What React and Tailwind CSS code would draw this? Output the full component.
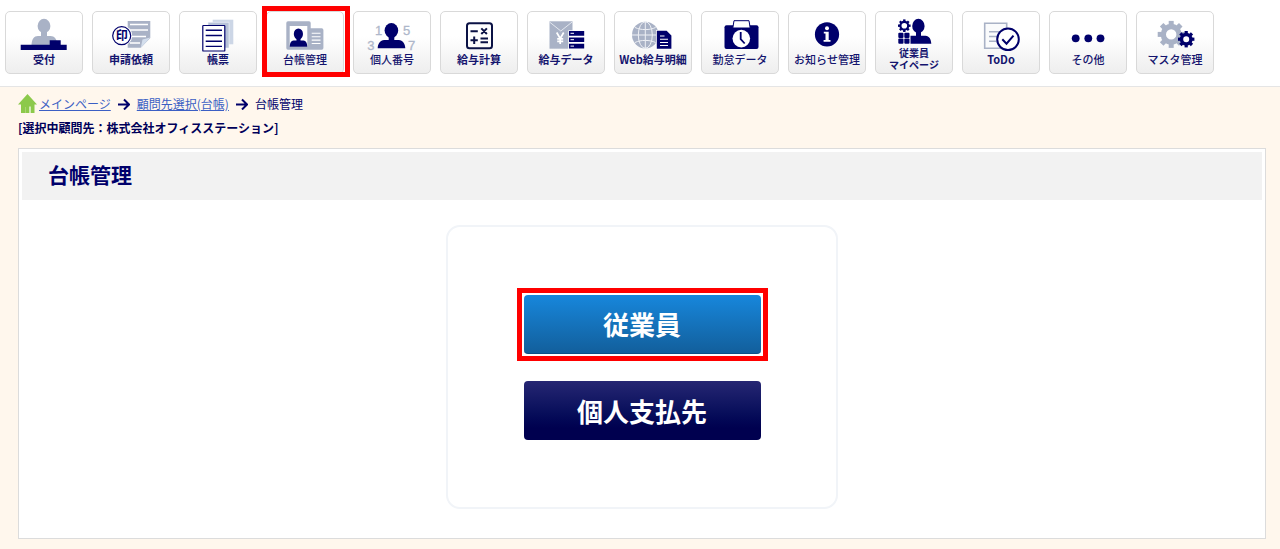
import React from 'react';

const NAVY = '#00006b';
const GRAY = '#a9b2c6';

// ==================================================
// ICON HELPERS
// ==================================================
const Icon = ({ children }) => (
  <svg
    viewBox="0 0 76 34"
    className="block h-[34px] w-[76px] shrink-0 overflow-visible"
    fill="none"
    aria-hidden="true"
  >
    {children}
  </svg>
);

const TEETH = [0, 45, 90, 135, 180, 225, 270, 315];

const Gear = ({ cx, cy, r, hole, tooth, color }) => (
  <g transform={`translate(${cx} ${cy})`} fill={color}>
    {TEETH.map((deg) => (
      <rect
        key={deg}
        x={-tooth / 2}
        y={-r}
        width={tooth}
        height={(r - hole) * 0.6}
        transform={`rotate(${deg})`}
      />
    ))}
    <circle
      r={(r * 0.78 + hole) / 2}
      fill="none"
      stroke={color}
      strokeWidth={r * 0.78 - hole}
    />
  </g>
);

// ==================================================
// MENU ICONS
// ==================================================
const ReceptionIcon = () => (
  <Icon>
    <ellipse cx="38" cy="14" rx="6.4" ry="7.2" fill={GRAY} />
    <path d="M35 19h6v5h3.5c4 0 6.5 3 6.8 9H25.5c.3-6 2.5-9 6.5-9h3z" fill={GRAY} />
    <path d="M14.7 32.7H43.7V28.3h11v4.4h6V38h-46z" fill={NAVY} />
  </Icon>
);

const RequestIcon = () => (
  <Icon>
    <path d="M34.7 9h22.6v17l-9.5 9.7H34.7z" fill={GRAY} />
    <path d="M47.8 35.7l1.7-8.3 7.8-2z" fill="#d3deed" />
    <path d="M37 12.5h18M37 18h18M37 24.5h16M37 31h10" stroke="#fff" strokeWidth="1.5" />
    <circle cx="28.7" cy="23.7" r="10.5" fill="#fff" />
    <circle cx="28.7" cy="23.7" r="9" fill="#fff" stroke={NAVY} strokeWidth="1.2" />
    <text x="28.7" y="28" textAnchor="middle" fontSize="12" fontWeight="700" fill={NAVY}>印</text>
  </Icon>
);

const FormsIcon = () => (
  <Icon>
    <path d="M32.7 7.7h20.6v24.6H32.7z" fill="#ccd6e6" />
    <path d="M28 10.3h21V36H28z" fill="#b7c2d8" stroke="#f4f6fa" strokeWidth=".6" />
    <rect x="22.8" y="13.5" width="22" height="25.5" rx=".6" fill="#fff" stroke={NAVY} strokeWidth="1.2" />
    <path d="M25.7 18.3H42M25.7 23.5H42M25.7 29.2H42M25.7 34.4H42" stroke={NAVY} strokeWidth="1.4" />
  </Icon>
);

const LedgerIcon = () => (
  <Icon>
    <path d="M21 9.2h21a1.7 1.7 0 0 1 1.7 1.7v5.4h11a1.7 1.7 0 0 1 1.7 1.7v18a1.7 1.7 0 0 1-1.7 1.7H21a1.7 1.7 0 0 1-1.7-1.7V10.9A1.7 1.7 0 0 1 21 9.2z" fill={GRAY} />
    <path d="M22.7 14h17.6v20.7H22.7z" fill="#fff" />
    <ellipse cx="31.4" cy="22" rx="4.6" ry="5.5" fill={NAVY} />
    <path d="M29.5 26h4v2.5h3c2.5.3 3.6 2.2 3.8 6.2H22.7c.2-4 1.3-5.9 3.8-6.2h3z" fill={NAVY} />
    <path d="M44.7 21.3h8.8M44.7 24.7h8.8M44.7 28.1h8.8M44.7 31.5h8.8" stroke="#fff" strokeWidth="1.1" />
  </Icon>
);

const MyNumberIcon = () => (
  <Icon>
    <g fill="#aeb7ca" stroke="#aeb7ca" strokeWidth=".3" className="font-['Liberation_Sans',sans-serif]" fontSize="13" textAnchor="middle">
      <text x="24.5" y="23">1</text>
      <text x="16.8" y="37.5">3</text>
      <text x="52.7" y="22.5">5</text>
      <text x="57.7" y="37.5">7</text>
    </g>
    <ellipse cx="37.4" cy="18.5" rx="6.8" ry="7.6" fill={NAVY} />
    <path d="M34.7 24h5.6v4h4.5c4 .5 6.3 3.5 6.5 8.2H23.7c.2-4.7 2.5-7.7 6.5-8.2h4.5z" fill={NAVY} />
  </Icon>
);

const CalcIcon = () => (
  <Icon>
    <rect x="26" y="11.2" width="25" height="25" rx="2.5" stroke="#0b1245" strokeWidth="2" />
    <path
      d="M29.5 19.2h7.3M40.3 16.4l5.6 5.6M45.9 16.4l-5.6 5.6M29.5 28.2h7.3M33.2 24.5v7.4M39.5 26.4h7.5M39.5 30.2h7.5"
      stroke="#0b1245"
      strokeWidth="2"
    />
  </Icon>
);

const PayDataIcon = () => (
  <Icon>
    <path d="M21.5 9.3h23v27.4h-23z" fill={GRAY} />
    <path d="M21.5 10l11.3 9 11.3-9" stroke="#e4e8ef" strokeWidth="1" />
    <path d="M28.7 20.5l3.5 6 3.5-6M32.2 26v6M29.2 26.8h6M29.2 29.3h6" stroke="#fff" strokeWidth="1.7" />
    <path d="M40.3 18.3h17v19h-17z" fill="#fff" />
    <path d="M41 19h15.2v4.7H41zM41 25.4h15.2v4.7H41zM41 31.8h15.2v4.7H41z" fill={NAVY} />
    <path d="M42.5 21.3h3.5M42.5 27.7h3.5M42.5 34.1h3.5" stroke="#fff" strokeWidth="1" />
  </Icon>
);

const WebPayIcon = () => (
  <Icon>
    <circle cx="30.3" cy="23" r="13.3" fill={GRAY} />
    <g stroke="#eef0f5" strokeWidth="1">
      <path d="M17 23h26.6M30.3 9.7v26.6M20 15.5c6 2.8 14.6 2.8 20.6 0M20 30.5c6-2.8 14.6-2.8 20.6 0" />
      <ellipse cx="30.3" cy="23" rx="7" ry="13.3" />
    </g>
    <path d="M41.8 18.8h9.8l4.8 4.7v13.2H41.8z" fill={NAVY} stroke="#fff" strokeWidth="1.6" paintOrder="stroke" />
    <path d="M45 24h4.5M45 27.3h8M45 30.5h8M45 33.5h8" stroke="#fff" strokeWidth="1.1" />
  </Icon>
);

const TimeDataIcon = () => (
  <Icon>
    <rect x="22.5" y="13.3" width="34" height="23.8" rx="2" fill={NAVY} />
    <path d="M32 8.7h15l1.2 7.3H30.8z" fill="#fff" stroke={NAVY} strokeWidth="1" />
    <circle cx="39.3" cy="26.6" r="8.8" fill="#fff" />
    <path d="M38.7 20v7.2l4 4.3" stroke={NAVY} strokeWidth="1.8" />
  </Icon>
);

const NoticeIcon = () => (
  <Icon>
    <circle cx="38" cy="22.4" r="12.1" fill={NAVY} />
    <circle cx="38" cy="16.2" r="2" fill="#fff" />
    <path d="M34.8 19.8h4.9v8.2h1.8v1.8h-6.9V28h1.9v-6.4h-1.7z" fill="#fff" />
  </Icon>
);

const MyPageIcon = () => (
  <Icon>
    <Gear cx={28.3} cy={13.7} r={6.3} hole={2.8} tooth={2.4} color={NAVY} />
    <g fill={NAVY}>
      <rect x="22.3" y="20.7" width="5.2" height="5.2" rx="1" />
      <rect x="28.3" y="20.7" width="5.2" height="5.2" rx="1" />
      <rect x="22.3" y="26.6" width="5.2" height="5.2" rx="1" />
      <rect x="28.3" y="26.6" width="5.2" height="5.2" rx="1" />
    </g>
    <ellipse cx="42.4" cy="14" rx="6.2" ry="7.2" fill={NAVY} />
    <path d="M40 19h5v4.7h4.5c3.8.4 5.5 3 5.8 8.1H34.5v-8.1H40z" fill={NAVY} />
  </Icon>
);

const TodoIcon = () => (
  <Icon>
    <path d="M21.7 11.2h22v25h-22z" fill="#fafbfc" stroke={GRAY} strokeWidth="1.6" />
    <path d="M26 19.7h13M26 24.5h9M26 29.3h7" stroke={GRAY} strokeWidth="1.4" />
    <circle cx="45" cy="27.3" r="10.8" fill="#fff" stroke={NAVY} strokeWidth="2" />
    <path d="M39.3 27.3l4.2 4.4 7-8" stroke={NAVY} strokeWidth="2" />
  </Icon>
);

const OthersIcon = () => (
  <Icon>
    <g fill={NAVY}>
      <circle cx="25.7" cy="26.3" r="3.9" />
      <circle cx="38.3" cy="26.3" r="3.9" />
      <circle cx="50.5" cy="26.3" r="3.9" />
    </g>
  </Icon>
);

const MasterIcon = () => (
  <Icon>
    <Gear cx={34.2} cy={22.4} r={13.5} hole={5.2} tooth={5} color={GRAY} />
    <Gear cx={49.2} cy={27.2} r={8.2} hole={3} tooth={3.2} color={NAVY} />
  </Icon>
);

const menuItems = [
  { label: '受付', icon: ReceptionIcon, bold: true },
  { label: '申請依頼', icon: RequestIcon, bold: true },
  { label: '帳票', icon: FormsIcon, bold: true },
  { label: '台帳管理', icon: LedgerIcon, marked: true },
  { label: '個人番号', icon: MyNumberIcon },
  { label: '給与計算', icon: CalcIcon, bold: true },
  { label: '給与データ', icon: PayDataIcon, bold: true },
  { label: 'Web給与明細', icon: WebPayIcon, bold: true },
  { label: '勤怠データ', icon: TimeDataIcon },
  { label: 'お知らせ管理', icon: NoticeIcon },
  { label: '従業員', label2: 'マイページ', icon: MyPageIcon, bold: true },
  { label: 'ToDo', icon: TodoIcon, bold: true },
  { label: 'その他', icon: OthersIcon },
  { label: 'マスタ管理', icon: MasterIcon },
];

// ==================================================
// TOP MENU
// ==================================================
const MenuButton = ({ item }) => {
  const MenuIcon = item.icon;

  return (
    <li className="relative shrink-0">
      <button
        type="button"
        className="flex h-[63px] w-[78px] flex-col items-center rounded-[5px] border border-[#d9d9d9] bg-linear-to-b from-white from-40% to-[#eeeeee] pb-0.5"
      >
        <MenuIcon />
        <span
          className={`flex flex-1 flex-col justify-center whitespace-nowrap text-[#14146e] ${
            item.label2 ? 'text-[10px] leading-3' : 'text-[11px] leading-4'
          } ${item.bold ? 'font-bold' : 'font-medium'}`}
        >
          <span>{item.label}</span>
          {item.label2 && <span>{item.label2}</span>}
        </span>
      </button>
      {item.marked && (
        <span className="pointer-events-none absolute -top-[5px] -right-1.5 -bottom-[3px] -left-1 border-[5px] border-[#ff0000]" />
      )}
    </li>
  );
};

const TopMenu = () => (
  <header className="border-b border-[#e5e5e5] bg-white pt-[11px] pb-3 pl-[5px]">
    <nav>
      <ul className="flex gap-[9px]">
        {menuItems.map((item) => (
          <MenuButton key={item.label} item={item} />
        ))}
      </ul>
    </nav>
  </header>
);

// ==================================================
// BREADCRUMB
// ==================================================
const Arrow = () => (
  <svg viewBox="0 0 12 12" className="mx-[7px] h-3 w-3" fill="none" aria-hidden="true">
    <path d="M0 6.5h11M6 1.5l5 5-5 5" stroke={NAVY} strokeWidth="2" />
  </svg>
);

const Breadcrumb = () => (
  <nav className="flex h-5 items-center text-xs text-[#00006b]">
    <svg viewBox="0 0 19 20" className="mr-0.5 h-5 w-[19px]" aria-hidden="true">
      <path d="M9.5 0L19 10.5h-2.5V19h-5v-6h-4v6H3v-8.5H0z" fill="#8cc94b" />
      <path d="M7.500 12h4v7h-4z" fill="#8cc94b" />
      <path d="M11 12.500h2v6.500h-2z" fill="#d3eab8" />
    </svg>
    <a href="#main" className="text-[#3b5fc4] underline">メインページ</a>
    <Arrow />
    <a href="#clients" className="text-[#3b5fc4] underline">顧問先選択(台帳)</a>
    <Arrow />
    <span>台帳管理</span>
  </nav>
);

const App = () => {
  return (
    <div className="min-h-screen bg-[#fff7ed] font-['Noto_Sans_CJK_JP','Noto_Sans',sans-serif]">
      <TopMenu />

      <div className="pt-[7px] pr-3.5 pb-2.5 pl-[18px]">
        <Breadcrumb />
        <p className="mt-1 text-xs leading-5 font-bold text-[#00005a]">
          [選択中顧問先：株式会社オフィスステーション]
        </p>

        <main className="mt-2.5 border border-[#dcdcdc] bg-white p-[3px]">
          <h1 className="bg-[#f2f2f2] px-[26px] pt-1.5 pb-2.5 text-[21px] leading-8 font-bold text-[#00006b]">
            台帳管理
          </h1>

          {/* Target selection */}
          <div className="mx-auto mt-[25px] mb-[26px] flex w-[392px] flex-col items-center gap-[27px] rounded-[14px] border-2 border-[#f1f4f8] pt-[68px] pb-[67px]">
            <div className="relative">
              <button
                type="button"
                className="block h-[59px] w-[237px] rounded-[4px] border-b border-[#0c4f86] bg-linear-to-b from-[#1787dc] to-[#125f9c] text-[26px] leading-8 font-bold text-white"
              >
                従業員
              </button>
              <span className="pointer-events-none absolute -inset-[7px] border-[5px] border-[#ff0000]" />
            </div>
            <button
              type="button"
              className="block h-[59px] w-[237px] rounded-[4px] bg-linear-to-b from-[#262673] to-[#00004f] to-80% text-[26px] leading-8 font-bold text-white"
            >
              個人支払先
            </button>
          </div>
        </main>
      </div>
    </div>
  );
};

export default App;
